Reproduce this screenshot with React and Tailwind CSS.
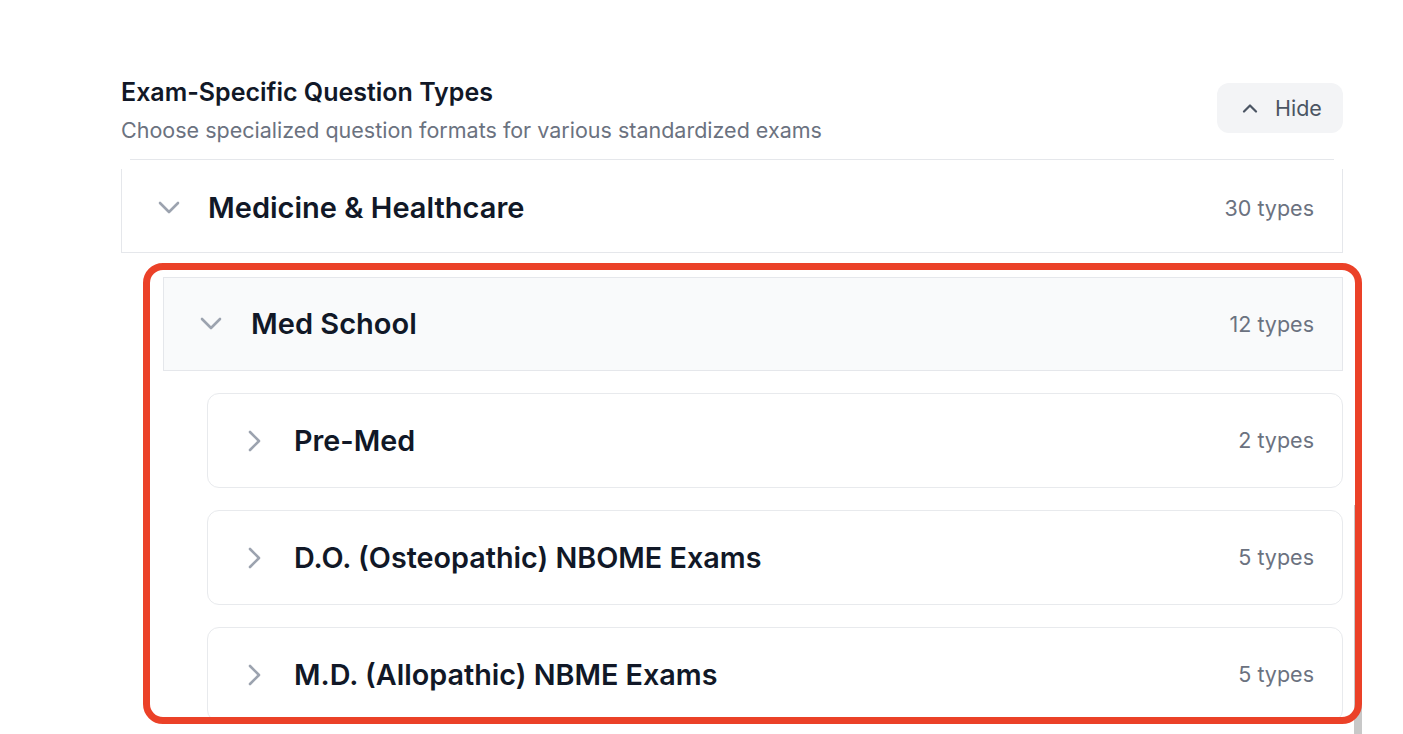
import { useState } from 'react'

const Chevron = ({ dir = 'down', className = '' }) => {
  if (dir === 'right') {
    return (
      <svg width="14" height="22" viewBox="0 0 14 22" fill="none" className={className}>
        <polyline points="2,2 11,11 2,20" stroke="currentColor" strokeWidth="2.6" strokeLinecap="round" strokeLinejoin="round" />
      </svg>
    )
  }
  if (dir === 'up') {
    return (
      <svg width="16" height="10" viewBox="0 0 16 10" fill="none" className={className}>
        <polyline points="2,8.5 8,2.5 14,8.5" stroke="currentColor" strokeWidth="2.2" strokeLinecap="round" strokeLinejoin="round" />
      </svg>
    )
  }
  return (
    <svg width="22" height="14" viewBox="0 0 22 14" fill="none" className={className}>
      <polyline points="2,2 11,11 20,2" stroke="currentColor" strokeWidth="2.6" strokeLinecap="round" strokeLinejoin="round" />
    </svg>
  )
}

const exams = [
  { name: 'Pre-Med', count: 2 },
  { name: 'D.O. (Osteopathic) NBOME Exams', count: 5 },
  { name: 'M.D. (Allopathic) NBME Exams', count: 5 },
]

export default function App() {
  const [open, setOpen] = useState(true)

  return (
    <div className="relative h-screen overflow-hidden bg-white font-['Inter',sans-serif]">
      <div className="pl-[121px] pr-[60px] pt-[76px]">
        {/* header */}
        <div className="flex items-start justify-between">
          <div>
            <h2 className="text-[25px] leading-[32px] font-semibold text-[#111827]">Exam-Specific Question Types</h2>
            <p className="mt-[7px] text-[21.5px] leading-[30px] text-[#6b7280]">
              Choose specialized question formats for various standardized exams
            </p>
          </div>
          <button
            onClick={() => setOpen(o => !o)}
            className="mt-[7px] flex h-[50px] w-[126px] items-center gap-[17px] rounded-xl bg-[#f3f4f6] pl-[25px] text-[21.5px] text-[#4b5563]"
          >
            <Chevron dir="up" className="text-[#4b5563]" />
            Hide
          </button>
        </div>

        <div className="mx-[9px] mt-[14px] border-t border-[#e5e7eb]" />

        {open && (
          <div className="mt-[9px]">
            {/* category */}
            <div className="flex h-[84px] items-center border-x border-b border-[#e5e7eb] pb-[5px] pl-[36px] pr-[28px]">
              <Chevron className="text-[#9ca3af]" />
              <span className="ml-[28px] text-[29px] font-semibold text-[#111827]">Medicine &amp; Healthcare</span>
              <span className="ml-auto text-[21.5px] text-[#6b7280]">30 types</span>
            </div>

            {/* subcategory */}
            <div className="ml-[42px] mt-[24px]">
              <div className="flex h-[94px] items-center border border-[#e5e7eb] bg-[#f9fafb] pl-[36px] pr-[28px]">
                <Chevron className="text-[#9ca3af]" />
                <span className="ml-[29px] text-[29px] font-semibold text-[#111827]">Med School</span>
                <span className="ml-auto text-[21.5px] text-[#6b7280]">12 types</span>
              </div>

              <div className="ml-[44px] mt-[22px] flex flex-col gap-[22px]">
                {exams.map(e => (
                  <div
                    key={e.name}
                    className="flex h-[95px] items-center rounded-xl border border-[#e8eaed] bg-white pl-[40px] pr-[28px]"
                  >
                    <Chevron dir="right" className="text-[#9ca3af]" />
                    <span className="ml-[32px] text-[28.75px] font-semibold text-[#111827]">{e.name}</span>
                    <span className="ml-auto text-[21.5px] text-[#6b7280]">{e.count} types</span>
                  </div>
                ))}
              </div>
            </div>
          </div>
        )}
      </div>

      {/* scrollbar thumb */}
      <div className="absolute left-[1354px] top-[505px] h-[240px] w-[8px] bg-[#c8c8c8]" />

      {/* highlight annotation */}
      <div className="pointer-events-none absolute left-[143px] top-[263px] h-[461px] w-[1219px] rounded-[20px] border-[7px] border-[#eb4128]" />
    </div>
  )
}
